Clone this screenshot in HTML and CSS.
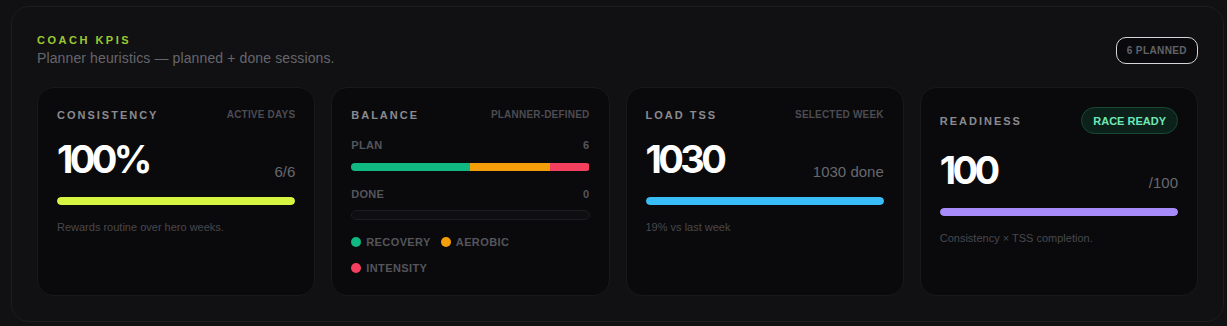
FILE: index.html
```html
<!DOCTYPE html>
<html>
<head>
    <title>Coach KPIs</title>
    <link rel="stylesheet" href="styles.css">
</head>
<body>
<div class="panel">
    <div class="panel-head">
        <div>
            <div class="eyebrow">Coach KPIs</div>
            <div class="subtitle">Planner heuristics — planned + done sessions.</div>
        </div>
        <div class="count-pill">6 PLANNED</div>
    </div>

    <div class="kpi-grid">
        <!-- Consistency -->
        <div class="kpi-card">
            <div class="kpi-head">
                <span class="kpi-label">Consistency</span>
                <span class="kpi-hint">ACTIVE DAYS</span>
            </div>
            <div class="kpi-main">
                <span class="kpi-value">100%</span>
                <span class="kpi-unit">6/6</span>
            </div>
            <div class="bar"><div class="bar-fill fill-lime" style="width: 100%"></div></div>
            <div class="kpi-note">Rewards routine over hero weeks.</div>
        </div>

        <!-- Balance -->
        <div class="kpi-card">
            <div class="kpi-head">
                <span class="kpi-label">Balance</span>
                <span class="kpi-hint">PLANNER-DEFINED</span>
            </div>
            <div class="mix-row first">
                <span>PLAN</span>
                <span>6</span>
            </div>
            <div class="bar stack">
                <div class="seg seg-recovery" style="width: 50%"></div>
                <div class="seg seg-aerobic" style="width: 33.333%"></div>
                <div class="seg seg-intensity" style="width: 16.667%"></div>
            </div>
            <div class="mix-row">
                <span>DONE</span>
                <span>0</span>
            </div>
            <div class="bar empty"></div>
            <div class="legend">
                <span class="legend-item"><i class="dot seg-recovery"></i>RECOVERY</span>
                <span class="legend-item"><i class="dot seg-aerobic"></i>AEROBIC</span>
                <span class="legend-item"><i class="dot seg-intensity"></i>INTENSITY</span>
            </div>
        </div>

        <!-- Load -->
        <div class="kpi-card">
            <div class="kpi-head">
                <span class="kpi-label">Load TSS</span>
                <span class="kpi-hint">SELECTED WEEK</span>
            </div>
            <div class="kpi-main">
                <span class="kpi-value">1030</span>
                <span class="kpi-unit">1030 done</span>
            </div>
            <div class="bar"><div class="bar-fill fill-blue" style="width: 100%"></div></div>
            <div class="kpi-note">19% vs last week</div>
        </div>

        <!-- Readiness -->
        <div class="kpi-card">
            <div class="kpi-head">
                <span class="kpi-label">Readiness</span>
                <span class="status-pill">RACE READY</span>
            </div>
            <div class="kpi-main">
                <span class="kpi-value">100</span>
                <span class="kpi-unit">/100</span>
            </div>
            <div class="bar"><div class="bar-fill fill-purple" style="width: 100%"></div></div>
            <div class="kpi-note">Consistency × TSS completion.</div>
        </div>
    </div>
</div>
</body>
</html>
```

FILE: styles.css
```css
/* base */
body {
    font-family: "Liberation Sans", Arial, sans-serif;
    background-color: #111113;
    margin: 0;
    padding: 6px 3px 4px 11px;
}

/* outer panel */
.panel {
    background-color: #111113;
    border: 1px solid #1e1e21;
    border-radius: 18px;
    padding: 25px;
}

.panel-head {
    display: flex;
    justify-content: space-between;
    align-items: center;
    margin-bottom: 19px;
}

.eyebrow {
    font-size: 11px;
    line-height: 16px;
    font-weight: bold;
    letter-spacing: 2.5px;
    text-transform: uppercase;
    color: #9cc932;
}

.subtitle {
    font-size: 14px;
    line-height: 20px;
    letter-spacing: 0.12px;
    color: #66666c;
}

.count-pill {
    height: 27px;
    box-sizing: border-box;
    padding: 0 10px;
    display: flex;
    align-items: center;
    border: 1px solid #d6d6da;
    border-radius: 10px;
    background-color: #0a0a0c;
    color: #626268;
    font-size: 10px;
    font-weight: bold;
    letter-spacing: 0.4px;
}

/* cards */
.kpi-grid {
    display: grid;
    grid-template-columns: repeat(4, 1fr);
    gap: 16px;
}

.kpi-card {
    background-color: #0a0a0c;
    border: 1px solid #19191c;
    border-radius: 16px;
    padding: 19px;
}

.kpi-head {
    display: flex;
    justify-content: space-between;
    align-items: center;
    min-height: 16px;
}

.kpi-label {
    font-size: 11px;
    line-height: 16px;
    font-weight: bold;
    letter-spacing: 2px;
    text-transform: uppercase;
    color: #8a8a90;
}

.kpi-hint {
    font-size: 10px;
    line-height: 16px;
    font-weight: bold;
    letter-spacing: 0.2px;
    color: #4c4c52;
}

.status-pill {
    height: 27px;
    box-sizing: border-box;
    padding: 0 11px;
    display: flex;
    align-items: center;
    border: 1px solid #184a34;
    border-radius: 14px;
    background-color: #0c211a;
    color: #6ee7b7;
    font-size: 11px;
    font-weight: bold;
}

.kpi-main {
    display: flex;
    justify-content: space-between;
    align-items: flex-end;
    margin-top: 17px;
}

.kpi-value {
    font-family: Inter, "Liberation Sans", sans-serif;
    font-size: 38px;
    line-height: 39px;
    font-weight: 700;
    letter-spacing: -3.6px;
    color: #fff;
}

.kpi-unit {
    font-size: 15px;
    line-height: 16px;
    margin-bottom: -1px;
    color: #68686e;
}

.kpi-note {
    margin-top: 14px;
    font-size: 11px;
    line-height: 16px;
    color: #48484d;
}

/* bars */
.bar {
    height: 8px;
    border-radius: 4px;
    margin-top: 18px;
    overflow: hidden;
    display: flex;
}

.bar-fill {
    height: 100%;
    border-radius: 4px;
}

.fill-lime { background-color: #d6f542; }
.fill-blue { background-color: #38bdf8; }
.fill-purple { background-color: #a78bfa; }

.seg { height: 100%; }
.seg-recovery { background-color: #10b981; }
.seg-aerobic { background-color: #f59e0b; }
.seg-intensity { background-color: #f43f5e; }

.bar.stack {
    margin-top: 10px;
}

.bar.empty {
    margin-top: 8px;
    background-color: #0f0f12;
    border: 1px solid #1d1d21;
    border-radius: 5px;
}

/* balance rows */
.mix-row {
    display: flex;
    justify-content: space-between;
    margin-top: 15px;
    font-size: 11px;
    line-height: 16px;
    font-weight: bold;
    letter-spacing: 0.3px;
    color: #55555b;
}

.mix-row.first {
    margin-top: 14px;
}

.legend {
    display: flex;
    flex-wrap: wrap;
    gap: 10px 10px;
    margin-top: 14px;
}

.legend-item {
    display: flex;
    align-items: center;
    gap: 5px;
    font-size: 11px;
    line-height: 16px;
    font-weight: bold;
    letter-spacing: 0.4px;
    color: #55555b;
}

.dot {
    width: 10px;
    height: 10px;
    border-radius: 50%;
}
```
